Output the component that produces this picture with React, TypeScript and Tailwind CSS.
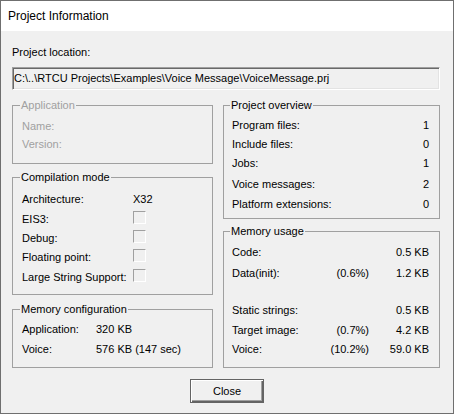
import React from "react";

type GroupProps = {
  title: string;
  disabled?: boolean;
  legendClass: string;
  className: string;
  children?: React.ReactNode;
};

function Group({ title, disabled, legendClass, className, children }: GroupProps) {
  return (
    <div className={`relative border border-[#a0a0a0] ${className}`}>
      <span
        className={`absolute top-[-7px] bg-[#f0f0f0] px-[1px] leading-[13px] whitespace-nowrap ${legendClass} ${
          disabled ? "text-[#a0a0a0]" : "text-black"
        }`}
      >
        {title}
      </span>
      {children}
    </div>
  );
}

function CheckBox() {
  return (
    <div className="-mt-[2px] w-[13px] h-[13px] border border-t-[#a0a0a0] border-l-[#a0a0a0] border-b-white border-r-white bg-[#f0f0f0]" />
  );
}

const compilation: { label: string; h: string; box: boolean; value?: string }[] = [
  { label: "Architecture:", h: "h-[20px]", box: false, value: "X32" },
  { label: "EIS3:", h: "h-[19px]", box: true },
  { label: "Debug:", h: "h-[19px]", box: true },
  { label: "Floating point:", h: "h-[20px]", box: true },
  { label: "Large String Support:", h: "h-[13px]", box: true },
];

const overview: { label: string; value: string; h: string }[] = [
  { label: "Program files:", value: "1", h: "h-[19px]" },
  { label: "Include files:", value: "0", h: "h-[19px]" },
  { label: "Jobs:", value: "1", h: "h-[21px]" },
  { label: "Voice messages:", value: "2", h: "h-[20px]" },
  { label: "Platform extensions:", value: "0", h: "h-[13px]" },
];

const usage: { label: string; pct: string; value: string; h: string }[] = [
  { label: "Code:", pct: "", value: "0.5 KB", h: "h-[21px]" },
  { label: "Data(init):", pct: "(0.6%)", value: "1.2 KB", h: "h-[37px]" },
  { label: "Static strings:", pct: "", value: "0.5 KB", h: "h-[20px]" },
  { label: "Target image:", pct: "(0.7%)", value: "4.2 KB", h: "h-[19px]" },
  { label: "Voice:", pct: "(10.2%)", value: "59.0 KB", h: "h-[13px]" },
];

export default function App() {
  return (
    <div className="w-[454px] h-[414px] border border-[#6f6f6f] bg-[#f0f0f0] flex flex-col font-['Liberation_Sans',Arial,sans-serif] text-[11px] leading-[13px] text-black overflow-hidden">
      <div className="h-[30px] shrink-0 bg-white flex items-center pl-[7px] text-[12px] leading-[16px]">
        Project Information
      </div>
      <div className="flex flex-col pl-[11px] pt-[15px]">
        <div className="h-[13px] leading-[13px]">Project location:</div>
        <div className="mt-[8px] w-[428px] h-[23px] flex items-center border border-t-[#a0a0a0] border-l-[#a0a0a0] border-b-white border-r-white shadow-[inset_1px_1px_0_#696969,inset_-1px_-1px_0_#e3e3e3] pl-[1px] whitespace-nowrap overflow-hidden">
          {"C:\\..\\RTCU Projects\\Examples\\Voice Message\\VoiceMessage.prj"}
        </div>

        <div className="mt-[15px] flex gap-[10px]">
          {/* Left column */}
          <div className="w-[201px] flex flex-col">
            <Group title="Application" disabled legendClass="left-[7px]" className="h-[59px] pt-[14px] pl-[9px] text-[#a0a0a0]">
              <div className="h-[18px]">Name:</div>
              <div className="h-[13px]">Version:</div>
            </Group>

            <Group title="Compilation mode" legendClass="left-[7px]" className="mt-[13px] h-[118px] pt-[15px] pl-[9px]">
              {compilation.map((r) => (
                <div key={r.label} className={`${r.h} flex items-start`}>
                  <div className="w-[111px] whitespace-nowrap">{r.label}</div>
                  {r.box ? <CheckBox /> : <div>{r.value}</div>}
                </div>
              ))}
            </Group>

            <Group title="Memory configuration" legendClass="left-[7px]" className="mt-[14px] h-[59px] pt-[13px] pl-[9px]">
              <div className="h-[20px] flex">
                <div className="w-[74px]">Application:</div>
                <div>320 KB</div>
              </div>
              <div className="h-[13px] flex">
                <div className="w-[74px]">Voice:</div>
                <div>576 KB (147 sec)</div>
              </div>
            </Group>
          </div>

          {/* Right column */}
          <div className="w-[217px] flex flex-col">
            <Group title="Project overview" legendClass="left-[6px]" className="h-[114px] pt-[13px] pl-[8px] pr-[10px]">
              {overview.map((r) => (
                <div key={r.label} className={`${r.h} flex justify-between`}>
                  <div className="whitespace-nowrap">{r.label}</div>
                  <div>{r.value}</div>
                </div>
              ))}
            </Group>

            <Group title="Memory usage" legendClass="left-[6px]" className="mt-[12px] h-[137px] pt-[14px] pl-[8px] pr-[10px]">
              {usage.map((r) => (
                <div key={r.label} className={`${r.h} flex`}>
                  <div className="flex-1 whitespace-nowrap">{r.label}</div>
                  <div className="text-right whitespace-nowrap">{r.pct}</div>
                  <div className="w-[60px] text-right whitespace-nowrap">{r.value}</div>
                </div>
              ))}
            </Group>
          </div>
        </div>

        <button
          type="button"
          className="mt-[11px] ml-[178px] w-[74px] h-[24px] flex items-center justify-center border border-[#646464] bg-[#f0f0f0] shadow-[inset_1px_1px_0_#ffffff,inset_-1px_-1px_0_#646464,inset_-2px_-2px_0_#a0a0a0] text-[11px] leading-[13px] text-black"
        >
          Close
        </button>
      </div>
    </div>
  );
}
